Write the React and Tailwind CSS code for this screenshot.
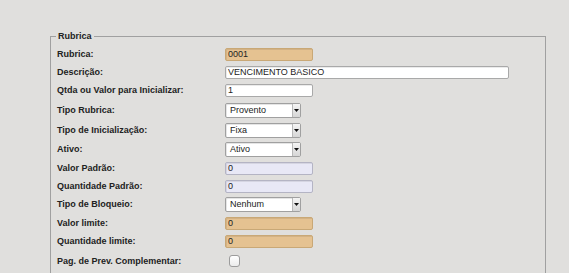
import React from 'react'

const FONT = { fontFamily: '"Liberation Sans", Arial, sans-serif' }

function TextBox({ value, tone = 'white', wide = false }) {
  const toneCls =
    tone === 'tan'
      ? 'bg-[#e5c291] border-[#c9a876]'
      : tone === 'lilac'
      ? 'bg-[#e8e8f6] border-[#b4b4c4]'
      : 'bg-white border-[#a9a9a9]'
  return (
    <div
      className={`h-[13px] ${wide ? 'w-[284px]' : 'w-[88px]'} border rounded-[2px] ${toneCls} flex items-center pl-[2px] text-[9px] leading-none text-[#222] shadow-[inset_1px_1px_0_rgba(0,0,0,0.08)]`}
    >
      {value}
    </div>
  )
}

function Select({ value }) {
  return (
    <div className="h-[15px] w-[76px] border border-[#a0a0a0] bg-white flex items-stretch rounded-[2px] shadow-[inset_1px_1px_0_rgba(0,0,0,0.1)]">
      <span className="flex-1 flex items-center pl-[4px] text-[9px] leading-none text-[#222]">{value}</span>
      <span className="w-[8px] bg-gradient-to-b from-[#f4f4f4] to-[#d6d6d6] border-l border-[#b8b8b8] flex items-center justify-center">
        <svg width="5" height="3" viewBox="0 0 5 3">
          <path d="M0 0h5L2.5 3z" fill="#111" />
        </svg>
      </span>
    </div>
  )
}

const rows = [
  { label: 'Rubrica:', h: 'h-[18px]', el: <TextBox value="0001" tone="tan" /> },
  { label: 'Descrição:', h: 'h-[18px]', el: <TextBox value="VENCIMENTO BASICO" wide /> },
  { label: 'Qtda ou Valor para Inicializar:', h: 'h-[19px]', el: <TextBox value="1" /> },
  { label: 'Tipo Rubrica:', h: 'h-[20px]', el: <Select value="Provento" /> },
  { label: 'Tipo de Inicialização:', h: 'h-[20px]', el: <Select value="Fixa" /> },
  { label: 'Ativo:', h: 'h-[19px]', el: <Select value="Ativo" /> },
  { label: 'Valor Padrão:', h: 'h-[18px]', el: <TextBox value="0" tone="lilac" /> },
  { label: 'Quantidade Padrão:', h: 'h-[18px]', el: <TextBox value="0" tone="lilac" /> },
  { label: 'Tipo de Bloqueio:', h: 'h-[19px]', el: <Select value="Nenhum" /> },
  { label: 'Valor limite:', h: 'h-[18px]', el: <TextBox value="0" tone="tan" /> },
  { label: 'Quantidade limite:', h: 'h-[19px]', el: <TextBox value="0" tone="tan" /> },
  {
    label: 'Pag. de Prev. Complementar:',
    h: 'h-[20px]',
    el: <div className="ml-[4px] w-[11px] h-[12px] rounded-[3px] border border-[#9c9c9c] bg-gradient-to-b from-white to-[#ececec]" />,
  },
]

export default function App() {
  return (
    <div className="w-[569px] h-[273px] overflow-hidden bg-[#e0dfdd]" style={FONT}>
      <fieldset className="mt-[30px] ml-[50px] w-[496px] border border-[#a0a0a0] px-[5px] pb-[10px]">
        <legend className="px-[2px] text-[9px] leading-[12px] font-bold text-[#222]">Rubrica</legend>
        <div className="pt-[3px] flex flex-col">
          {rows.map((r) => (
            <div key={r.label} className={`grid grid-cols-[169px_1fr] items-center ${r.h}`}>
              <span className="pl-[1px] text-[9px] font-bold text-[#222] leading-none">{r.label}</span>
              <div className="flex items-center">{r.el}</div>
            </div>
          ))}
        </div>
      </fieldset>
    </div>
  )
}
